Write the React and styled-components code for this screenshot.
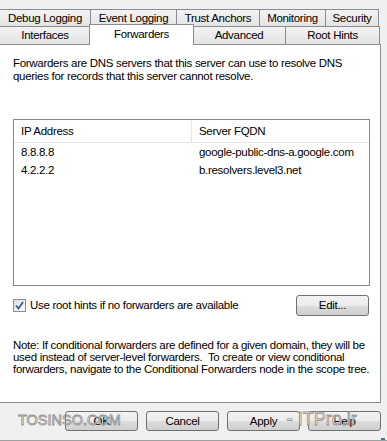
import styled, { createGlobalStyle } from "styled-components";

const GlobalStyle = createGlobalStyle`
  html, body {
    margin: 0;
    padding: 0;
    background: #f0f0f0;
  }
  body {
    font-family: "Liberation Sans", Arial, sans-serif;
    font-size: 11.5px;
    letter-spacing: -0.3px;
    color: #000;
  }
`;

const Dialog = styled.div`
  position: relative;
  width: 387px;
  height: 441px;
  overflow: hidden;
  background: #f0f0f0;
  border-bottom: 1px solid #a0a0a0;
  box-sizing: border-box;
`;

const TabRow = styled.div`
  display: flex;
  margin-left: -1px;
  margin-top: ${(p) => p.$top}px;
  height: ${(p) => p.$height}px;
  position: relative;
  z-index: 1;
`;

const Tab = styled.div`
  width: ${(p) => p.$w}px;
  margin-right: -1px;
  box-sizing: border-box;
  border: 1px solid #898c95;
  border-bottom: none;
  background: linear-gradient(#f3f3f3, #e3e3e3);
  display: flex;
  align-items: center;
  justify-content: center;
  line-height: 1;
  padding-top: 1px;
  white-space: nowrap;
`;

const ActiveTab = styled(Tab)`
  position: relative;
  z-index: 2;
  background: #fff;
  margin-top: -2px;
  height: calc(100% + 3px);
  margin-left: -1px;
  width: ${(p) => p.$w + 2}px;
  margin-right: -2px;
  align-items: flex-start;
  padding-top: 4px;
`;

const Panel = styled.div`
  margin-left: -1px;
  width: 382px;
  height: 359px;
  box-sizing: border-box;
  border: 1px solid #898c95;
  background: #fff;
  padding: 12px 0 0 13px;
  display: flex;
  flex-direction: column;
`;

const Para = styled.p`
  margin: 0;
  width: ${(p) => p.$w}px;
  line-height: 13px;
`;

const List = styled.div`
  margin-top: 36px;
  width: 357px;
  height: 167px;
  box-sizing: border-box;
  border: 1px solid #828790;
  background: #fff;
`;

const HeaderRow = styled.div`
  display: grid;
  grid-template-columns: 178px 1fr;
  height: 23px;
  border-bottom: 1px solid #e5e5e5;
  box-sizing: border-box;
`;

const HeaderCell = styled.div`
  display: flex;
  align-items: center;
  padding-left: 7px;
  border-right: 1px solid #e5e5e5;
  &:last-child {
    border-right: none;
  }
`;

const Row = styled.div`
  display: grid;
  grid-template-columns: 178px 1fr;
  height: 18px;
  align-items: center;
`;

const Cell = styled.div`
  padding-left: 7px;
  white-space: nowrap;
`;

const OptionRow = styled.div`
  margin-top: 8px;
  width: 356px;
  display: flex;
  align-items: center;
  justify-content: space-between;
  height: 22px;
`;

const CheckLabel = styled.label`
  display: flex;
  align-items: center;
  gap: 4px;
`;

const Box = styled.span`
  width: 13px;
  height: 13px;
  box-sizing: border-box;
  border: 1px solid #8e8f8f;
  background: linear-gradient(135deg, #dcdcdc, #fbfbfb);
  display: flex;
  align-items: center;
  justify-content: center;
`;

const Button = styled.button`
  width: ${(p) => p.$w || 73}px;
  height: ${(p) => p.$h || 20}px;
  box-sizing: border-box;
  border: 1px solid #707070;
  border-radius: 3px;
  background: linear-gradient(#f2f2f2 0%, #ebebeb 50%, #dddddd 51%, #cfcfcf 100%);
  font: inherit;
  letter-spacing: inherit;
  color: #000;
  padding: 0;
`;

const Note = styled(Para)`
  margin-top: 23px;
  line-height: 12px;
`;

const Footer = styled.div`
  display: flex;
  justify-content: flex-end;
  gap: 8px;
  padding: 8px 6px 0 0;
`;

// site watermark stamped over the button row
const Watermark = styled.div`
  position: absolute;
  left: 18px;
  top: 409px;
  display: flex;
  align-items: center;
  letter-spacing: 0;
  font-family: "Liberation Sans", Arial, sans-serif;
  color: rgba(255, 255, 255, 0.8);
  -webkit-text-stroke: 0.8px #8f8f8f;
  pointer-events: none;
  white-space: nowrap;
`;

const WatermarkText = styled.span`
  font-size: ${(p) => p.$size}px;
  margin-left: ${(p) => p.$gap || 0}px;
`;

const Corner = styled.div`
  position: absolute;
  right: 2px;
  bottom: 0;
  width: 4px;
  height: 2px;
  background: #3a6fd0;
`;

const tabsTop = [
  ["Debug Logging", 92],
  ["Event Logging", 87],
  ["Trust Anchors", 84],
  ["Monitoring", 67],
  ["Security", 54],
];

const tabsBottom = [
  ["Interfaces", 92],
  ["Forwarders", 103, true],
  ["Advanced", 94],
  ["Root Hints", 95],
];

const forwarders = [
  ["8.8.8.8", "google-public-dns-a.google.com"],
  ["4.2.2.2", "b.resolvers.level3.net"],
];

export default function App() {
  return (
    <>
      <GlobalStyle />
      <Dialog>
        <TabRow $top={9} $height={18}>
          {tabsTop.map(([label, w]) => (
            <Tab key={label} $w={w}>{label}</Tab>
          ))}
        </TabRow>
        <TabRow $top={-1} $height={18}>
          {tabsBottom.map(([label, w, active]) =>
            active ? (
              <ActiveTab key={label} $w={w}>{label}</ActiveTab>
            ) : (
              <Tab key={label} $w={w}>{label}</Tab>
            )
          )}
        </TabRow>
        <Panel>
          <Para $w={350}>
            Forwarders are DNS servers that this server can use to resolve DNS
            queries for records that this server cannot resolve.
          </Para>
          <List>
            <HeaderRow>
              <HeaderCell>IP Address</HeaderCell>
              <HeaderCell>Server FQDN</HeaderCell>
            </HeaderRow>
            {forwarders.map(([ip, fqdn]) => (
              <Row key={ip}>
                <Cell>{ip}</Cell>
                <Cell>{fqdn}</Cell>
              </Row>
            ))}
          </List>
          <OptionRow>
            <CheckLabel>
              <Box>
                <svg width="9" height="9" viewBox="0 0 9 9">
                  <path d="M1 4.5 L3.5 7.5 L8 1" fill="none" stroke="#3c5a9a" strokeWidth="1.8" />
                </svg>
              </Box>
              Use root hints if no forwarders are available
            </CheckLabel>
            <Button $w={73} $h={21}>Edit...</Button>
          </OptionRow>
          <Note $w={362}>
            Note: If conditional forwarders are defined for a given domain, they will be
            used instead of server-level forwarders.&nbsp; To create or view conditional
            forwarders, navigate to the Conditional Forwarders node in the scope tree.
          </Note>
        </Panel>
        <Footer>
          <Button>OK</Button>
          <Button>Cancel</Button>
          <Button>Apply</Button>
          <Button>Help</Button>
        </Footer>
        <Watermark>
          <WatermarkText $size={14.5}>TOSINSO.COM</WatermarkText>
          <WatermarkText $size={18} $gap={166}>- ITPro.ir</WatermarkText>
        </Watermark>
        <Corner />
      </Dialog>
    </>
  );
}
